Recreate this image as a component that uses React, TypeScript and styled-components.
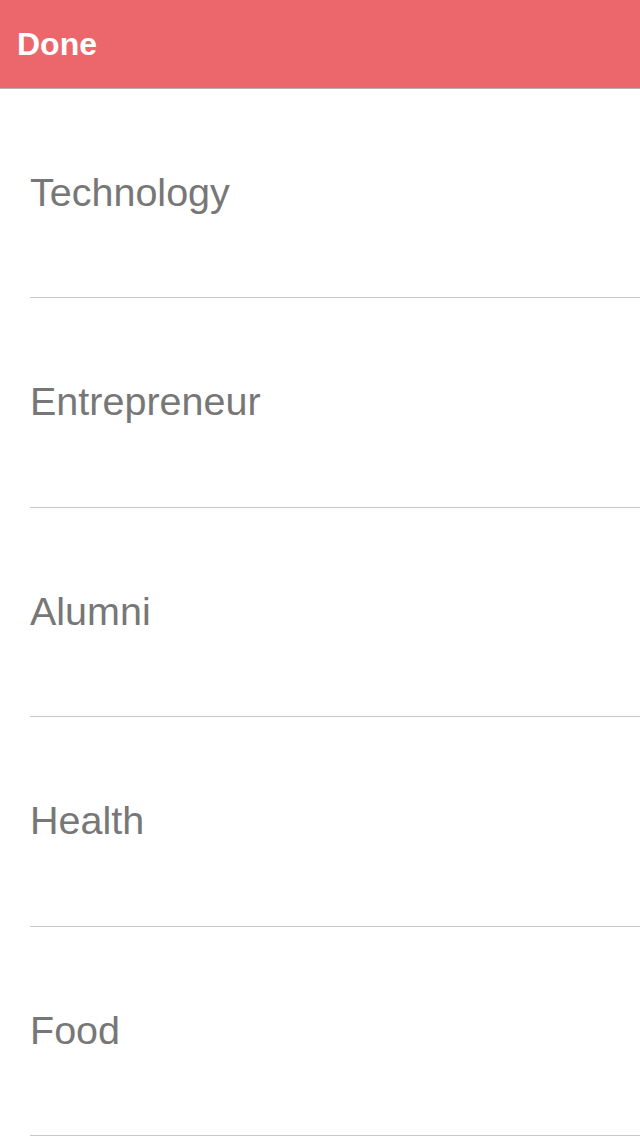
import styled, { createGlobalStyle } from "styled-components";

const GlobalStyle = createGlobalStyle`
  html, body {
    margin: 0;
    padding: 0;
    background: #fff;
    font-family: "Liberation Sans", Arial, sans-serif;
  }
`;

const categories = ["Technology", "Entrepreneur", "Alumni", "Health", "Food"];

const App = () => {
  return (
    <Wrap>
      <GlobalStyle />
      <TopBar>
        <DoneButton>Done</DoneButton>
      </TopBar>
      <List>
        {categories.map((name) => (
          <Row key={name}>
            <Label>{name}</Label>
          </Row>
        ))}
      </List>
    </Wrap>
  );
};

export default App;

const Wrap = styled.div`
  width: 640px;
  min-height: 1136px;
  background: #fff;
  overflow: hidden;
`;

const TopBar = styled.div`
  height: 88px;
  background: #ec676b;
  border-bottom: 1px solid #b2b2b2;
  display: flex;
  align-items: center;
  padding-left: 17px;
`;

const DoneButton = styled.div`
  color: #fff;
  font-size: 32px;
  font-weight: bold;
  margin-top: 1px;
`;

const List = styled.div`
  padding-left: 30px;
  margin-top: -0.5px;
`;

const Row = styled.div`
  height: 208.5px;
  border-bottom: 1px solid #c8c8c8;
  display: flex;
  align-items: center;
`;

const Label = styled.div`
  color: #777;
  font-size: 39.5px;
  margin-top: -1px;
`;
